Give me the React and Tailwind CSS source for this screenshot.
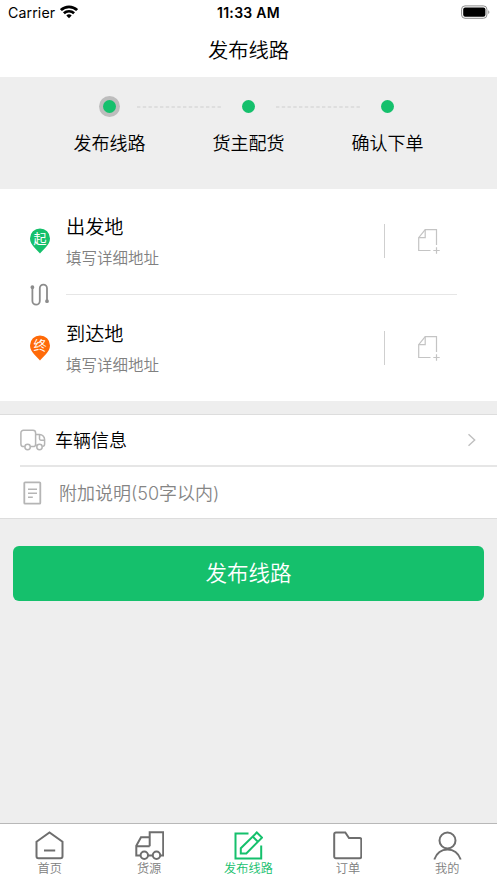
import clsx from 'clsx';

const steps = ['发布线路', '货主配货', '确认下单'];

function StatusBar() {
    return (
        <div className="flex h-[26px] items-center justify-between pl-[8px] pr-[7px] font-['Inter','Liberation_Sans',sans-serif] text-black">
            <div className="flex flex-1 items-center gap-[5px]">
                <span className="text-[14.2px] font-normal leading-none tracking-[0.1px]">Carrier</span>
                <svg className="-mt-[2px] h-[14px] w-[18px]" viewBox="0 0 18 14" fill="none" stroke="#000">
                    <path d="M0.9 5.1a11.6 11.6 0 0 1 16.2 0" strokeWidth="2.8" />
                    <path d="M3.9 8.3a7.3 7.3 0 0 1 10.2 0" strokeWidth="2.6" />
                    <path d="M9 13.2L6.3 10.6a3.8 3.8 0 0 1 5.4 0z" fill="#000" stroke="none" />
                </svg>
            </div>
            <span className="mr-px text-[14px] font-semibold leading-none tracking-[0.3px]">11:33 AM</span>
            <div className="flex flex-1 justify-end">
                <svg className="-mt-[2px] h-[14px] w-[30px]" viewBox="0 0 30 14" fill="none">
                    <rect x="1.6" y="0.9" width="25.3" height="12.4" rx="3.4" stroke="#8c8c8c" />
                    <rect x="3.2" y="2.5" width="22.2" height="9.2" rx="2" fill="#000" />
                    <path d="M28.4 5.2c1.2.5 1.2 3.3 0 3.8z" fill="#777" />
                </svg>
            </div>
        </div>
    );
}

function Steps() {
    return (
        <div className="h-[112px] bg-[#eeeeee] pt-[19px]">
            <div className="flex items-center justify-center">
                {steps.map((step, index) => (
                    <div key={step} className="flex items-center">
                        {index > 0 && (
                            <svg className="mx-[17px] mt-[1px] h-[2px] w-[84px]" viewBox="0 0 84 2">
                                <path d="M0 1h84" stroke="#d9d9d9" strokeWidth="1.5" strokeDasharray="3.4 2.35" />
                            </svg>
                        )}
                        <div
                            className={clsx(
                                'flex h-[21px] w-[21px] items-center justify-center rounded-full',
                                index === 0 && 'bg-[#bdbdbd]'
                            )}
                        >
                            <div className="h-[13.5px] w-[13.5px] rounded-full bg-[#15c06c]" />
                        </div>
                    </div>
                ))}
            </div>
            <div className="mx-auto mt-[13px] grid w-[417px] grid-cols-3 text-center text-[18px] leading-[28px]">
                {steps.map((step) => (
                    <span key={step}>{step}</span>
                ))}
            </div>
        </div>
    );
}

function Pin({ label, color }) {
    return (
        <svg className="h-[26px] w-[22px]" viewBox="0 0 22 26">
            <path d="M11 25.6C8.6 22 1 17 1 10.4a10 10 0 0 1 20 0C21 17 13.4 22 11 25.6z" fill={color} />
            <text x="11" y="15.4" textAnchor="middle" fontSize="13" fontWeight="400" fill="#fff">{label}</text>
        </svg>
    );
}

function AddressRow({ title, label, color }) {
    return (
        <div className="flex h-[106px] items-center">
            <div className="mb-px w-[66px] pl-[29px]">
                <Pin label={label} color={color} />
            </div>
            <div className="flex-1 pt-[3px]">
                <div className="text-[19.2px] leading-[28px] text-black">{title}</div>
                <div className="mt-[4px] text-[15.5px] leading-[28px] text-[#808080]">填写详细地址</div>
            </div>
            <div className="h-[34px] w-px bg-[#cfcfcf]" />
            <div className="flex w-[112px] pl-[32px]">
                <svg className="h-[26px] w-[24px]" viewBox="0 0 24 26" fill="none" stroke="#c4c4c4" strokeWidth="1.2">
                    <path d="M13.5 22.500H1.700V9.700L8.200 1.700H19.500V17" />
                    <path d="M8.200 1.700V9.700H1.700" />
                    <path d="M16.300 22.500h6.400M19.500 19.300v6.400" />
                </svg>
            </div>
        </div>
    );
}

function Addresses() {
    return (
        <div className="relative h-[212px] bg-white">
            <div className="-mt-px">
                <AddressRow title="出发地" label="起" color="#15c06c" />
            </div>
            <div className="ml-[66px] mr-[40px] h-px bg-[#e6e6e6]" />
            <AddressRow title="到达地" label="终" color="#ff6a08" />
            <svg className="absolute left-[30px] top-[94px] h-[24px] w-[20px]" viewBox="0 0 20 24" fill="none" stroke="#8c8c8c" strokeWidth="1.8">
                <path d="M2.4 4v14a3.7 3.7 0 0 0 7.4 0V5.2a3.6 3.6 0 0 1 7.2 0V19" />
                <circle cx="2.4" cy="4.2" r="1" fill="#8c8c8c" />
                <circle cx="17" cy="18.2" r="1" fill="#8c8c8c" />
            </svg>
        </div>
    );
}

function Details() {
    return (
        <div className="mt-[13px] border-y border-[#dddddd] bg-white">
            <div className="flex h-[50px] items-center pl-[20px] pr-[21px]">
                <svg className="h-[22px] w-[26px]" viewBox="0 0 26 22" fill="none" stroke="#b5b5b5" strokeWidth="1.5">
                    <path d="M4.8 17.6H3.5a2.6 2.6 0 0 1-2.6-2.6V3.9a2.6 2.6 0 0 1 2.6-2.6H13a2.6 2.6 0 0 1 2.6 2.6v11.5a2.2 2.2 0 0 1-2.2 2.2h-3" />
                    <path d="M15.6 5.5h4a5 5 0 0 1 5 5v4.6a2.5 2.5 0 0 1-2.1 2.5M19.5 6v3.8a1.4 1.4 0 0 0 1.4 1.4h3.6M15.6 15a2 2 0 0 0 1 2" />
                    <circle cx="7.6" cy="18" r="2.7" />
                    <circle cx="19.5" cy="18" r="2.7" />
                </svg>
                <span className="ml-[9px] flex-1 text-[18px] text-black">车辆信息</span>
                <svg className="h-[14px] w-[9px]" viewBox="0 0 9 14" fill="none" stroke="#bfbfbf" strokeWidth="1.4">
                    <path d="M1.5 1.2L7.7 7 1.5 12.8" />
                </svg>
            </div>
            <div className="ml-[20px] h-[2px] bg-[#e6e6e6]" />
            <div className="flex h-[51px] items-center pl-[23px]">
                <svg className="h-[24px] w-[19px]" viewBox="0 0 19 24" fill="none" stroke="#b5b5b5" strokeWidth="1.8">
                    <rect x="1.3" y="1.3" width="16" height="21.4" rx="0.8" />
                    <path d="M5 8.3h9M5 12.3h9M5 16.3h4.8" strokeWidth="1.5" />
                </svg>
                <span className="mt-px ml-[17px] text-[18px] text-[#858585]">附加说明(50字以内)</span>
            </div>
        </div>
    );
}

const tabs = [
    {
        label: '首页',
        icon: (
            <>
                <path d="M1.5 10.7L14.5 1.5l13 9.2v14.6a2 2 0 0 1-2 2h-22a2 2 0 0 1-2-2z" />
                <path d="M9 19.5h11.2" />
            </>
        ),
    },
    {
        label: '货源',
        icon: (
            <>
                <path d="M5.7 24.5H1.3V14.8L6 6.3h8.7M14.7 15.3V1.2h13.5v23.3H25M13 24.5h5M1.3 15.3h13.4" />
                <circle cx="9.3" cy="24.3" r="3.7" />
                <circle cx="21.5" cy="24.3" r="3.7" />
            </>
        ),
    },
    {
        label: '发布线路',
        active: true,
        icon: (
            <>
                <path d="M14.5 2.5H1.5v25h25.700V14.5" />
                <path d="M6.8 22.4v-5.2L22.8 1.5l5.2 5.1L12.3 22.4zM18.7 5.5l5.2 5.2" />
            </>
        ),
    },
    {
        label: '订单',
        icon: <path d="M1.2 3.2a1.7 1.7 0 0 1 1.7-1.7h9.4l3.7 5.5h10.6a1.7 1.7 0 0 1 1.7 1.7v16.9a1.7 1.7 0 0 1-1.7 1.7H2.9a1.7 1.7 0 0 1-1.7-1.7z" />,
    },
    {
        label: '我的',
        icon: (
            <>
                <circle cx="14.5" cy="9.5" r="8" />
                <path d="M1.3 28.500c5-13.200 21.400-13.200 26.400 0" />
            </>
        ),
    },
];

function TabBar() {
    return (
        <nav className="mt-auto grid h-[60px] grid-cols-5 border-t border-[#b8b8b8] bg-white">
            {tabs.map((tab) => (
                <div
                    key={tab.label}
                    className={clsx('flex flex-col items-center pt-[6.5px]', tab.active ? 'text-[#15c06c]' : 'text-[#6e6e6e]')}
                >
                    <svg className="h-[29px] w-[29px]" viewBox="0 0 29 29" fill="none" stroke="currentColor" strokeWidth="2">
                        {tab.icon}
                    </svg>
                    <span className={clsx('mt-[1.5px] text-[12.2px] leading-[16px]', !tab.active && 'text-[#808080]')}>
                        {tab.label}
                    </span>
                </div>
            ))}
        </nav>
    );
}

export default function App() {
    return (
        <div className="flex h-[883px] w-[497px] flex-col overflow-hidden bg-[#eeeeee] font-['Inter','Noto_Sans_CJK_SC',sans-serif] font-[350] text-black">
            <header className="h-[77px] bg-white">
                <StatusBar />
                <h1 className="mt-px text-center text-[20.3px] font-[350] leading-[48px]">发布线路</h1>
            </header>
            <Steps />
            <Addresses />
            <Details />
            <button className="mx-[13px] mt-[27px] h-[55px] rounded-[6px] bg-[#15c06c] text-[21.5px] text-white">发布线路</button>
            <TabBar />
        </div>
    );
}
